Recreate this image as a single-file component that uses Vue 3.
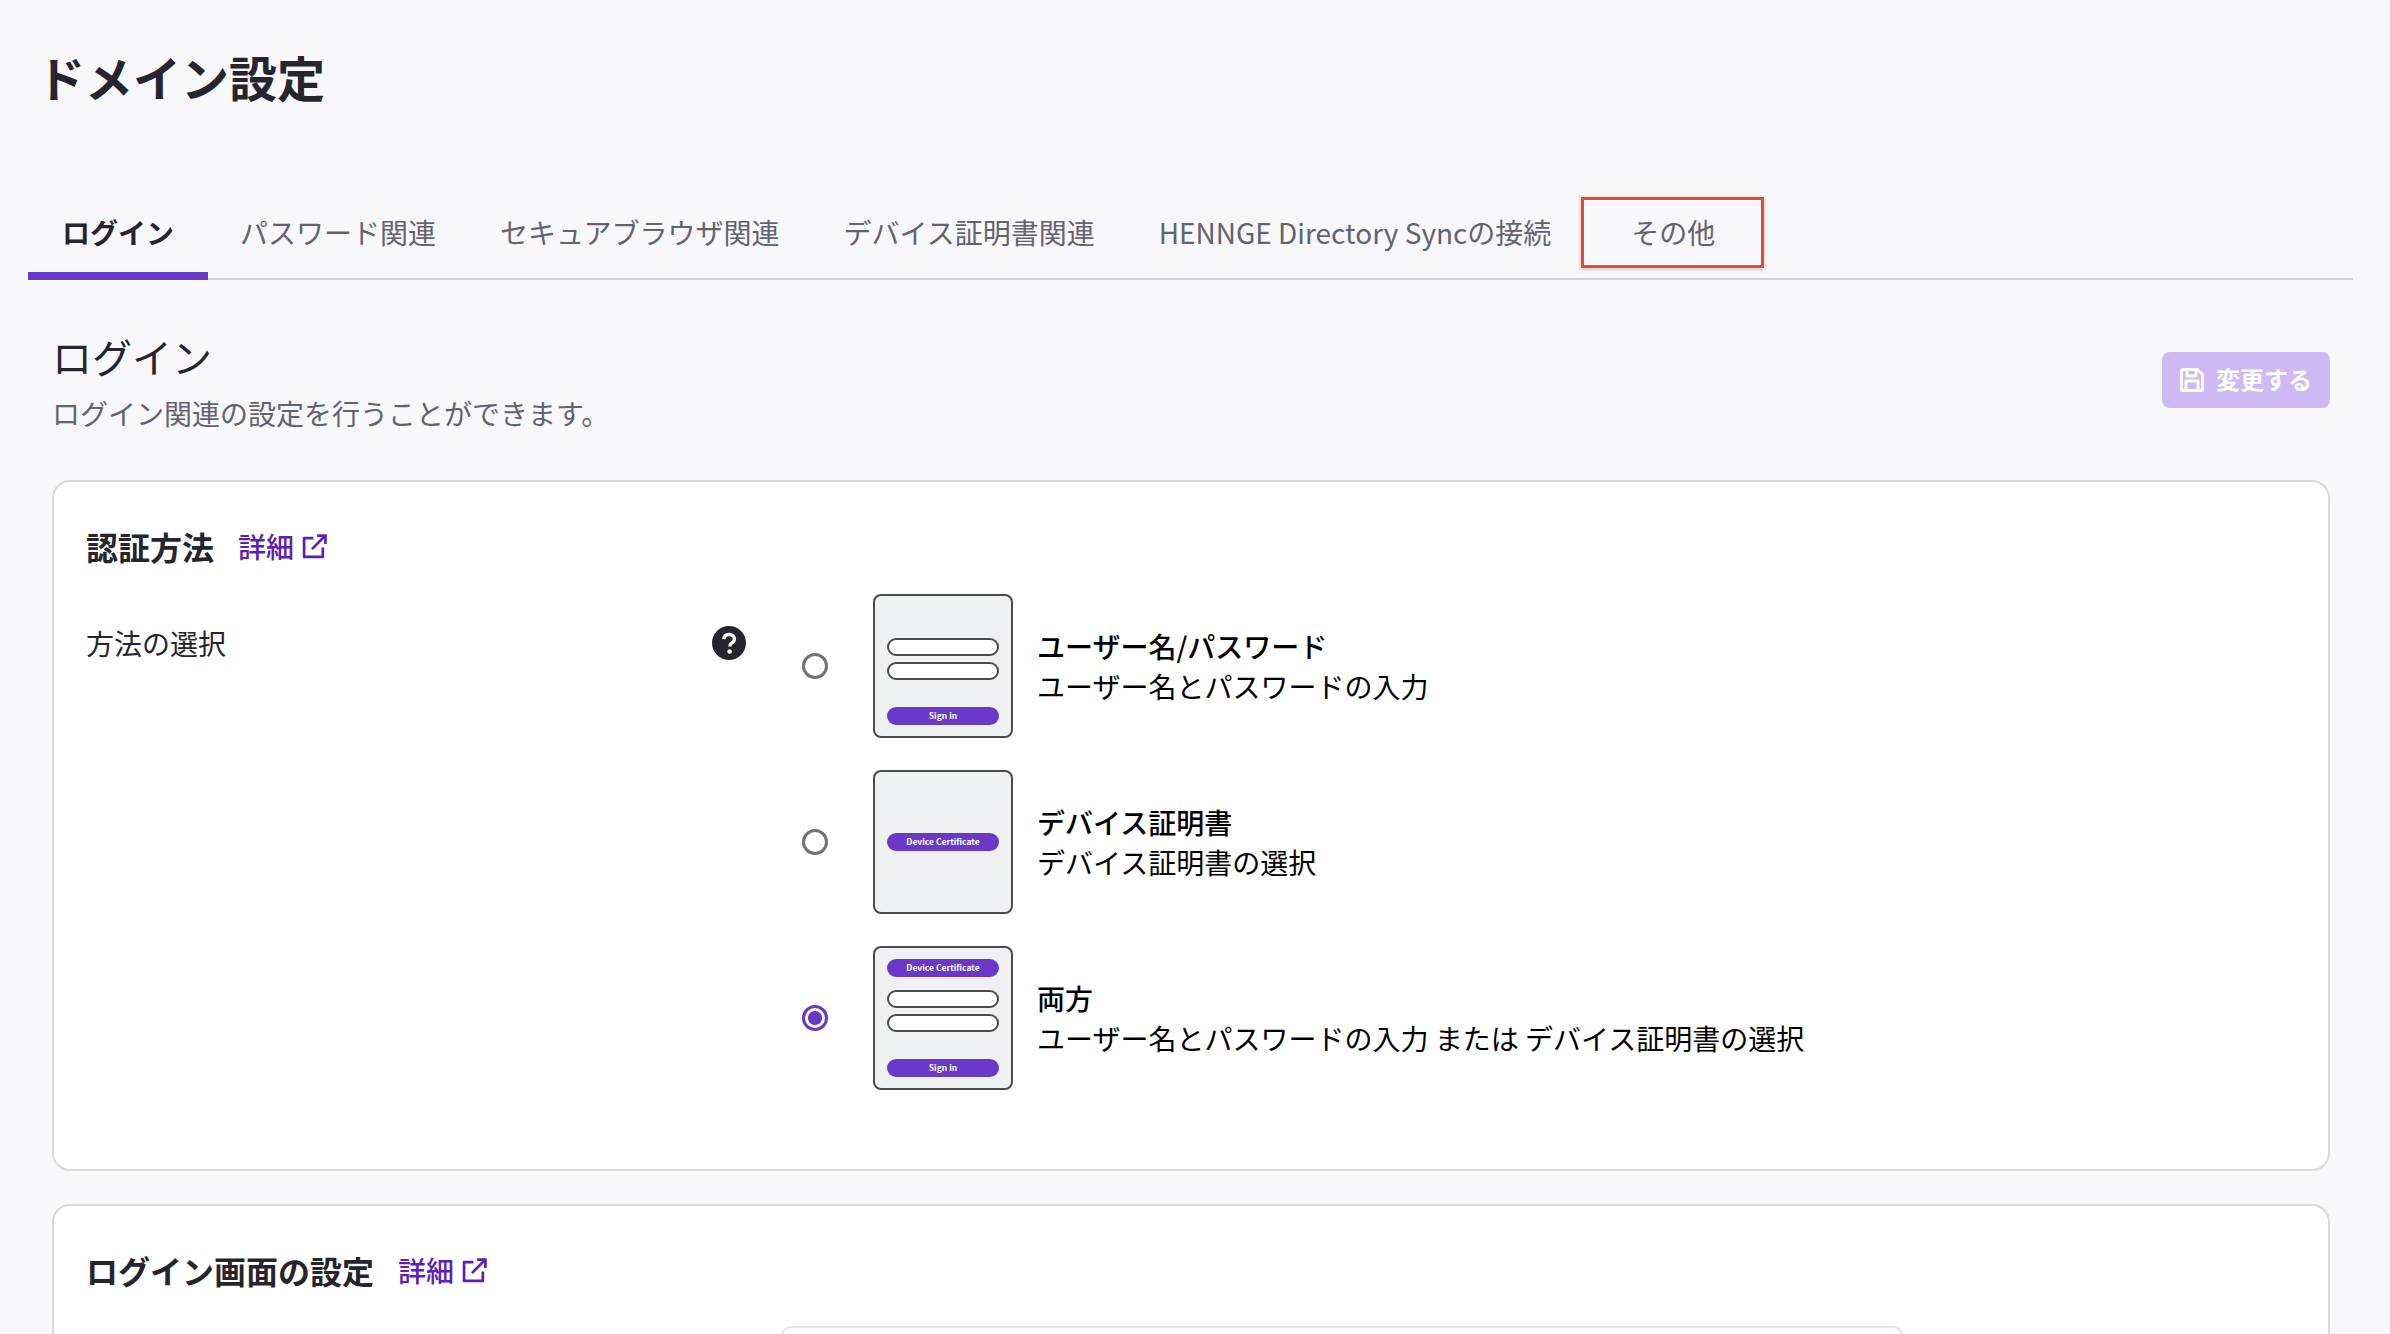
<script setup>
const tabs = ['ログイン', 'パスワード関連', 'セキュアブラウザ関連', 'デバイス証明書関連', 'HENNGE Directory Syncの接続', 'その他']

const methods = [
  { id: 'password', title: 'ユーザー名/パスワード', text: 'ユーザー名とパスワードの入力', device: false, fields: true, checked: false },
  { id: 'device', title: 'デバイス証明書', text: 'デバイス証明書の選択', device: true, fields: false, checked: false },
  { id: 'both', title: '両方', text: 'ユーザー名とパスワードの入力 または デバイス証明書の選択', device: true, fields: true, checked: true },
]
</script>

<template>
  <div class="page">
    <h1 class="page__title">ドメイン設定</h1>

    <nav class="tabs">
      <a
        v-for="(tab, i) in tabs"
        :key="tab"
        class="tabs__item"
        :class="{ 'tabs__item--active': i === 0, 'tabs__item--marked': i === tabs.length - 1 }"
      >
        {{ tab }}
        <span v-if="i === tabs.length - 1" class="tabs__mark"></span>
      </a>
    </nav>

    <main class="content">
      <header class="section-head">
        <div>
          <h2 class="section-head__title">ログイン</h2>
          <p class="section-head__desc">ログイン関連の設定を行うことができます。</p>
        </div>
        <button class="save" disabled>
          <svg class="save__icon" viewBox="0 0 24 24" fill="none" stroke="currentColor" stroke-width="2.800" stroke-linejoin="round">
            <path d="M1.500 3A1.500 1.500 0 0 1 3 1.500h14.500l5 5V21a1.500 1.500 0 0 1-1.500 1.500H3A1.500 1.500 0 0 1 1.500 21Z" />
            <path d="M7 1.500v6.500h9V1.500M6 22.500V13h12v9.500" />
          </svg>
          変更する
        </button>
      </header>

      <section class="card card--first">
        <div class="card__head">
          <h3 class="card__title">認証方法</h3>
          <a class="detail">
            詳細
            <svg class="detail__icon" viewBox="0 0 24 24" fill="none" stroke="currentColor" stroke-width="2.600">
              <path d="M11 4H2v18h18v-9" stroke-linejoin="round" />
              <path d="M9.500 14.500 22.500 1.500M14.500 1.500h8v8" />
            </svg>
          </a>
        </div>

        <div class="field">
          <div class="field__label">
            <span>方法の選択</span>
            <svg class="help" viewBox="0 0 34 34">
              <circle cx="17" cy="17" r="17" fill="#25242f" />
              <path d="M11.800 13.200c.3-3 2.500-4.700 5.400-4.700 3 0 5.200 1.800 5.200 4.400 0 2-1 3-2.600 4-1.500.9-1.900 1.500-1.900 3v.6" fill="none" stroke="#fff" stroke-width="3.400" />
              <circle cx="17.600" cy="25.500" r="2.300" fill="#fff" />
            </svg>
          </div>

          <div class="methods">
            <label v-for="m in methods" :key="m.id" class="method">
              <input class="method__radio" type="radio" name="method" :checked="m.checked" />
              <div class="thumb" :class="{ 'thumb--center': !m.fields }">
                <div v-if="m.device" class="thumb__btn" :class="{ 'thumb__btn--top': m.fields }">Device Certificate</div>
                <template v-if="m.fields">
                  <div class="thumb__input"></div>
                  <div class="thumb__input"></div>
                  <div class="thumb__btn thumb__btn--sign">Sign in</div>
                </template>
              </div>
              <div class="method__text">
                <strong class="method__title">{{ m.title }}</strong>
                <span>{{ m.text }}</span>
              </div>
            </label>
          </div>
        </div>
      </section>

      <section class="card">
        <div class="card__head">
          <h3 class="card__title">ログイン画面の設定</h3>
          <a class="detail">
            詳細
            <svg class="detail__icon" viewBox="0 0 24 24" fill="none" stroke="currentColor" stroke-width="2.600">
              <path d="M11 4H2v18h18v-9" stroke-linejoin="round" />
              <path d="M9.500 14.500 22.500 1.500M14.500 1.500h8v8" />
            </svg>
          </a>
        </div>
        <div class="inner-box"></div>
      </section>
    </main>
  </div>
</template>

<style>
html,
body {
  margin: 0;
  background: #f8f8fb;
}
</style>

<style scoped>
.page {
  height: 1334px;
  overflow: hidden;
  padding: 44px 37px 0 28px;
  box-sizing: border-box;
  background: #f8f8fb;
  color: #25242f;
  font-family: "Noto Sans CJK JP", "Noto Sans", sans-serif;
}

.page__title {
  margin: 0 0 86px 9px;
  font-size: 48px;
  line-height: 64px;
  font-weight: 700;
}

/* ======================================================
   Tabs
   ====================================================== */
.tabs {
  display: flex;
  border-bottom: 2px solid #d4d4d8;
}

.tabs__item {
  position: relative;
  margin-bottom: -2px;
  padding: 18px 32px 28px;
  font-size: 28px;
  line-height: 40px;
  color: #63636e;
  white-space: nowrap;
}

.tabs__item--active {
  padding: 18px 34px 19px;
  border-bottom: 8px solid #6a38c8;
  color: #25242f;
  font-weight: 700;
}

.tabs__item--marked {
  margin-left: 16px;
}

.tabs__mark {
  position: absolute;
  top: 3px;
  left: -18px;
  right: -17px;
  height: 71px;
  box-sizing: border-box;
  border: 3px solid #ea4a2c;
  box-shadow: 0 1px 4px rgba(0, 0, 0, 0.25);
}

/* ======================================================
   Section header
   ====================================================== */
.content {
  padding: 48px 23px 0 24px;
}

.section-head {
  display: flex;
  align-items: center;
  justify-content: space-between;
  margin-bottom: 47px;
}

.section-head__title {
  margin: 0 0 9px;
  font-size: 40px;
  line-height: 56px;
  font-weight: 400;
}

.section-head__desc {
  margin: 0;
  font-size: 28px;
  line-height: 40px;
  color: #63636e;
}

.save {
  display: flex;
  align-items: center;
  gap: 12px;
  width: 168px;
  height: 56px;
  margin-bottom: 2px;
  padding: 0 0 2px 18px;
  border: none;
  border-radius: 8px;
  background: #cdb9f3;
  color: #fff;
  font-family: inherit;
  font-size: 24px;
  font-weight: 700;
}

.save__icon {
  width: 24px;
  height: 24px;
  margin-top: 2px;
}

/* ======================================================
   Cards
   ====================================================== */
.card {
  box-sizing: border-box;
  padding: 42px 32px 79px;
  border: 2px solid #d8d8dd;
  border-radius: 18px;
  background: #fff;
}

.card--first {
  margin-bottom: 33px;
}

.card__head {
  display: flex;
  align-items: center;
  gap: 24px;
}

.card__title {
  margin: 0;
  font-size: 32px;
  line-height: 44px;
  font-weight: 700;
}

.detail {
  display: flex;
  align-items: center;
  gap: 8px;
  font-size: 28px;
  line-height: 40px;
  font-weight: 500;
  color: #5b21b6;
}

.detail__icon {
  width: 25px;
  height: 25px;
}

.field {
  display: grid;
  grid-template-columns: 660px 1fr;
  column-gap: 36px;
  margin-top: 26px;
}

.field__label {
  display: flex;
  align-items: center;
  justify-content: space-between;
  align-self: start;
  padding-top: 29px;
  font-size: 28px;
  line-height: 40px;
}

.help {
  width: 34px;
  height: 34px;
  margin-bottom: 1px;
}

/* ======================================================
   Method options
   ====================================================== */
.methods {
  display: flex;
  flex-direction: column;
  gap: 32px;
  padding-left: 20px;
}

.method {
  display: flex;
  align-items: center;
  color: #000;
}

.method__radio {
  appearance: none;
  flex-shrink: 0;
  box-sizing: border-box;
  width: 26px;
  height: 26px;
  margin: 0 45px 0 0;
  border: 3px solid #71717a;
  border-radius: 50%;
  background: #fff;
}

.method__radio:checked {
  border-color: #6a38c8;
  background: radial-gradient(circle, #6a38c8 0 6.500px, #fff 7.500px);
}

.thumb {
  display: flex;
  flex-direction: column;
  justify-content: flex-end;
  flex-shrink: 0;
  box-sizing: border-box;
  width: 140px;
  height: 144px;
  margin-right: 24px;
  padding: 0 12px 11px;
  border: 2px solid #4a4a50;
  border-radius: 8px;
  background: #eff0f2;
}

.thumb--center {
  justify-content: center;
  padding-bottom: 0;
}

.thumb__input {
  box-sizing: border-box;
  height: 18px;
  margin-bottom: 6px;
  border: 2px solid #4a4a50;
  border-radius: 9px;
  background: #fff;
}

.thumb__btn {
  height: 18px;
  border-radius: 9px;
  background: #6a38c8;
  color: #fff;
  font-size: 8.500px;
  line-height: 17px;
  font-weight: 700;
  text-align: center;
  white-space: nowrap;
}

.thumb__btn--top {
  margin-bottom: 13px;
}

.thumb__btn--sign {
  margin-top: 21px;
}

.method__text {
  display: flex;
  flex-direction: column;
  font-size: 28px;
  line-height: 40px;
}

.method__title {
  font-weight: 500;
}

.inner-box {
  height: 80px;
  margin: 34px 0 0 695px;
  width: 1118px;
  border: 2px solid #e4e4e7;
  border-radius: 10px;
}
</style>
